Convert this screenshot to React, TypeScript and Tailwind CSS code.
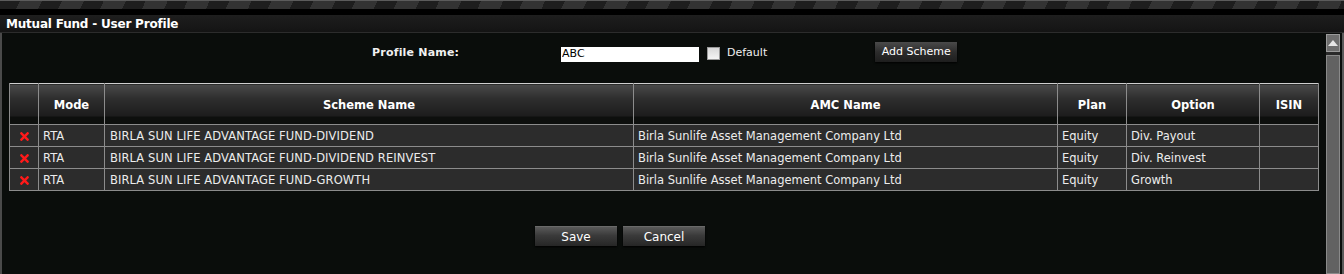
import { FaTimes } from "react-icons/fa";

const rows = [
  { mode: "RTA", scheme: "BIRLA SUN LIFE ADVANTAGE FUND-DIVIDEND", option: "Div. Payout" },
  { mode: "RTA", scheme: "BIRLA SUN LIFE ADVANTAGE FUND-DIVIDEND REINVEST", option: "Div. Reinvest" },
  { mode: "RTA", scheme: "BIRLA SUN LIFE ADVANTAGE FUND-GROWTH", option: "Growth" },
];

const headers = [
  { label: "", w: "w-[29px]" },
  { label: "Mode", w: "w-[66px]" },
  { label: "Scheme Name", w: "w-[529px]" },
  { label: "AMC Name", w: "w-[424px]" },
  { label: "Plan", w: "w-[69px]" },
  { label: "Option", w: "w-[133px]" },
  { label: "ISIN", w: "w-[59px]" },
];

function DarkButton({ label, w }: { label: string; w: string }) {
  return (
    <button
      className={`${w} h-[20px] bg-[linear-gradient(#5a5a5a,#3a3a3a_45%,#262626)] text-[12px] text-white border-t border-[#6a6a6a] shadow-[0_1px_2px_#000]`}
    >
      {label}
    </button>
  );
}

export default function App() {
  return (
    <div className="w-[1344px] h-[274px] overflow-hidden bg-[#0a0d0b] flex flex-col font-['DejaVu_Sans',Verdana,sans-serif] text-[11.5px] text-white">
      {/* top stripe band */}
      <div className="h-px bg-[#5c5c5c]" />
      <div className="h-[8px] bg-[repeating-linear-gradient(115deg,#1e1e1e_0_18px,#333333_18px_38px)]" />
      <div className="h-[6px] bg-black" />
      {/* title bar */}
      <div className="h-[18px] bg-[linear-gradient(#1e1e1e,#141414)] border-b border-[#2c2c2c] flex items-center pl-[6px] pt-[1px]">
        <span className="font-bold text-[12px] tracking-[-0.2px]">Mutual Fund - User Profile</span>
      </div>

      <div className="flex flex-1 min-h-0">
        <div className="flex-1 flex flex-col border-l-2 border-[#4a4a4a] pl-[7px]">
          {/* profile row */}
          <div className="flex items-center h-[36px] mt-[2px]">
            <span className="ml-[363px] w-[189px] font-bold text-[11px] tracking-[0.2px] text-[#f0f0f0]">Profile Name:</span>
            <input
              defaultValue="ABC"
              className="w-[138px] h-[15px] bg-white text-black text-[11px] px-[1px] outline-none mt-[2px]"
            />
            <span className="ml-[8px] w-[13px] h-[13px] bg-[linear-gradient(#d8d8d8,#f4f4f4)] border border-[#9a9a9a]" />
            <span className="ml-[7px] text-[11px] text-[#f0f0f0]">Default</span>
            <button className="ml-[108px] -mt-[2px] w-[82px] h-[20px] bg-[linear-gradient(#4a4a4a,#2c2c2c_50%,#1e1e1e)] text-[11px] text-white shadow-[0_1px_2px_#000]">
              Add Scheme
            </button>
          </div>

          {/* scheme table */}
          <table className="mt-[12px] table-fixed border-collapse w-[1309px] border border-[#cfcfcf]">
            <thead>
              <tr className="h-[41px]">
                {headers.map((h, i) => (
                  <th
                    key={i}
                    className={`${h.w} border-x border-[#8c8c8c] font-bold text-center align-top pt-[13px] bg-[linear-gradient(#4a4a4a,#2e2e2e_35%,#1c1c1c_80%,#0d0f0d_81%,#0d0f0d)]`}
                  >
                    {h.label}
                  </th>
                ))}
              </tr>
            </thead>
            <tbody>
              {rows.map((r, i) => (
                <tr key={i} className="h-[22px] bg-[#2c2c2c] text-[#ececec]">
                  <td className="border border-[#8c8c8c] text-center pt-[2px]">
                    <FaTimes className="inline text-[#ff1a1a] text-[13px]" />
                  </td>
                  <td className="border border-[#8c8c8c] px-[4px] pt-[2px]">{r.mode}</td>
                  <td className="border border-[#8c8c8c] px-[5px] pt-[2px] tracking-[0.1px]">{r.scheme}</td>
                  <td className="border border-[#8c8c8c] px-[4px] pt-[2px]">Birla Sunlife Asset Management Company Ltd</td>
                  <td className="border border-[#8c8c8c] px-[4px] pt-[2px]">Equity</td>
                  <td className="border border-[#8c8c8c] px-[4px] pt-[2px]">{r.option}</td>
                  <td className="border border-[#8c8c8c]" />
                </tr>
              ))}
            </tbody>
          </table>

          {/* actions */}
          <div className="flex gap-[6px] mt-[35px] ml-[526px]">
            <DarkButton label="Save" w="w-[82px]" />
            <DarkButton label="Cancel" w="w-[82px]" />
          </div>
        </div>

        {/* scrollbar */}
        <div className="w-[20px] flex flex-col pl-[2px] pr-[2px] bg-[#0a0d0b] border-r-2 border-[#5a5a5a]">
          <div className="mt-[1px] h-[18px] bg-[#6e6e6e] border border-[#9a9a9a] flex items-center justify-center">
            <svg width="10" height="6" viewBox="0 0 10 6">
              <polygon points="0,6 5,0 10,6" fill="#e6e6e6" />
            </svg>
          </div>
          <div className="h-[3px] bg-[#2a2a2a]" />
          <div className="flex-1 bg-[#626262] border border-[#8a8a8a]" />
        </div>
      </div>
    </div>
  );
}
